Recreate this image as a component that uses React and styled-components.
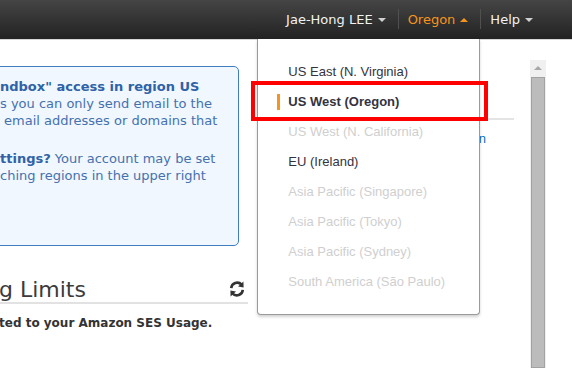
import React from 'react';
import styled, { createGlobalStyle } from 'styled-components';

const GlobalStyle = createGlobalStyle`
  html, body {
    margin: 0;
    padding: 0;
    background: #fff;
  }
  body {
    width: 572px;
    height: 368px;
    overflow: hidden;
    font-family: "DejaVu Sans", Verdana, sans-serif;
  }
`;

const Page = styled.div`
  width: 572px;
  height: 368px;
  display: flex;
  flex-direction: column;
  overflow: hidden;
`;

const TopBar = styled.div`
  height: 39px;
  flex: none;
  background: linear-gradient(#454545, #222);
  border-bottom: 1px solid #d6d6d6;
  display: flex;
  justify-content: flex-end;
  align-items: center;
  padding-right: 26px;
  position: relative;
  z-index: 5;
`;

const NavItem = styled.div`
  position: relative;
  height: 39px;
  display: flex;
  align-items: center;
  gap: 5px;
  padding: 0 13px 0 9px;
  font-size: 13px;
  color: ${p => (p.$active ? '#f7941d' : '#f2f2f2')};

  &::before {
    content: '';
    display: ${p => (p.$sep ? 'block' : 'none')};
    position: absolute;
    left: -1px;
    top: 9px;
    height: 20px;
    width: 1px;
    background: #505050;
  }
`;

const Caret = styled.span`
  width: 0;
  height: 0;
  border-left: 4px solid transparent;
  border-right: 4px solid transparent;
  ${p =>
    p.$up
      ? `border-bottom: 4px solid ${p.$color};`
      : `border-top: 4px solid ${p.$color};`}
`;

const Dropdown = styled.ul`
  position: absolute;
  top: 39px;
  right: 1px;
  width: 221px;
  margin: 0;
  padding: 18px 0 17px;
  list-style: none;
  background: #fff;
  border: 1px solid #9a9a9a;
  border-top: none;
  border-radius: 0 0 4px 4px;
  box-shadow: 0 2px 3px rgba(0, 0, 0, 0.18);
  font-family: "Liberation Sans", Arial, sans-serif;
  font-size: 13px;
`;

const RegionItem = styled.li`
  position: relative;
  height: 30px;
  line-height: 30px;
  padding-left: 30px;
  white-space: nowrap;
  color: ${p => (p.$disabled ? '#cfcfcf' : '#333340')};
  font-weight: ${p => (p.$selected ? 'bold' : 'normal')};

  &::before {
    content: '';
    display: ${p => (p.$selected ? 'block' : 'none')};
    position: absolute;
    left: 19px;
    top: 7px;
    width: 3px;
    height: 16px;
    background: #f7941d;
  }
`;

const Highlight = styled.span`
  position: absolute;
  left: -7px;
  right: -9px;
  top: -6px;
  bottom: -4px;
  border: 4px solid #ff0000;
  pointer-events: none;
`;

const Main = styled.div`
  flex: 1;
  display: flex;
  min-height: 0;
`;

const LeftColumn = styled.div`
  width: 248px;
  flex: none;
  overflow: hidden;
  padding-top: 26px;
`;

const InfoBox = styled.div`
  width: 240px;
  height: 180px;
  margin-left: -1px;
  box-sizing: border-box;
  border: 1px solid #3f7cc0;
  border-radius: 0 5px 5px 0;
  background: #f0f7ff;
  padding-top: 11px;
  color: #4671ae;
  font-size: 13px;
  line-height: 17px;
  white-space: nowrap;
`;

const InfoPara = styled.p`
  margin: 0 0 21px;
`;

const Indent = styled.span`
  padding-left: 4px;
`;

const Strong = styled.b`
  color: #2f62a6;
`;

const SectionHead = styled.div`
  display: flex;
  align-items: flex-end;
  justify-content: space-between;
  margin-top: 26px;
  height: 30px;
  border-bottom: 2px solid #e2e2e2;
`;

const HeadTitle = styled.h2`
  margin: 0 0 -2px -1px;
  font-size: 22px;
  font-weight: normal;
  color: #3b3b3b;
  line-height: 28px;
  white-space: nowrap;
`;

const RefreshIcon = styled.svg`
  width: 20px;
  height: 20px;
  margin: 0 1px 3px 0;
`;

const Note = styled.p`
  margin: 12px 0 0 -1px;
  font-size: 12px;
  font-weight: bold;
  color: #333;
  white-space: nowrap;
`;

const MiddlePanel = styled.div`
  width: 257px;
  margin-left: 9px;
  flex: none;
  padding-top: 78px;
`;

const PanelRule = styled.div`
  height: 2px;
  background: #e4e4e4;
`;

const PanelLink = styled.div`
  margin-top: 11px;
  text-align: right;
  padding-right: 28px;
  font-family: "Liberation Sans", Arial, sans-serif;
  font-size: 13px;
  color: #0a6fc0;
  white-space: nowrap;
`;

const ScrollTrack = styled.div`
  width: 16px;
  margin: 20px 0 0 16px;
  flex: none;
  background: #f0f0f0;
  display: flex;
  flex-direction: column;
  align-items: center;
`;

const ScrollArrow = styled.div`
  height: 16px;
  width: 16px;
  display: flex;
  align-items: center;
  justify-content: center;

  &::after {
    content: '';
    border-left: 4px solid transparent;
    border-right: 4px solid transparent;
    border-bottom: 4px solid #a8a8a8;
  }
`;

const ScrollThumb = styled.div`
  flex: 1;
  width: 14px;
  box-sizing: border-box;
  margin-top: 1px;
  background: #bcbcbc;
  border: 1px solid #a2a2a2;
`;

const regions = [
  { name: 'US East (N. Virginia)' },
  { name: 'US West (Oregon)', selected: true },
  { name: 'US West (N. California)', disabled: true },
  { name: 'EU (Ireland)' },
  { name: 'Asia Pacific (Singapore)', disabled: true },
  { name: 'Asia Pacific (Tokyo)', disabled: true },
  { name: 'Asia Pacific (Sydney)', disabled: true },
  { name: 'South America (São Paulo)', disabled: true },
];

const App = () => {
  return (
    <Page>
      <GlobalStyle />
      <TopBar>
        <NavItem>
          Jae-Hong LEE <Caret $color="#d0d0d0" />
        </NavItem>
        <NavItem $sep $active>
          Oregon <Caret $up $color="#f7941d" />
          <Dropdown>
            {regions.map(r => (
              <RegionItem key={r.name} $disabled={r.disabled} $selected={r.selected}>
                {r.name}
                {r.selected && <Highlight />}
              </RegionItem>
            ))}
          </Dropdown>
        </NavItem>
        <NavItem $sep>
          Help <Caret $color="#d0d0d0" />
        </NavItem>
      </TopBar>

      <Main>
        <LeftColumn>
          <InfoBox>
            <InfoPara>
              <Strong>ndbox" access in region US</Strong>
              <br />
              s you can only send email to the
              <br />
              <Indent>email addresses or domains that</Indent>
            </InfoPara>
            <InfoPara>
              <Strong>ttings?</Strong> Your account may be set
              <br />
              ching regions in the upper right
            </InfoPara>
          </InfoBox>

          <SectionHead>
            <HeadTitle>g Limits</HeadTitle>
            <RefreshIcon viewBox="0 0 20 20">
              <path d="M4.2 9.2 A6 6 0 0 1 14.6 5.6" fill="none" stroke="#333" strokeWidth="2.6" />
              <path d="M16.4 2.6 L16.6 8.6 L11 7.6 Z" fill="#333" />
              <path d="M15.8 10.8 A6 6 0 0 1 5.4 14.4" fill="none" stroke="#333" strokeWidth="2.6" />
              <path d="M3.6 17.4 L3.4 11.4 L9 12.4 Z" fill="#333" />
            </RefreshIcon>
          </SectionHead>
          <Note>ted to your Amazon SES Usage.</Note>
        </LeftColumn>

        <MiddlePanel>
          <PanelRule />
          <PanelLink>Verify a New Domain</PanelLink>
        </MiddlePanel>

        <ScrollTrack>
          <ScrollArrow />
          <ScrollThumb />
        </ScrollTrack>
      </Main>
    </Page>
  );
};

export default App;
